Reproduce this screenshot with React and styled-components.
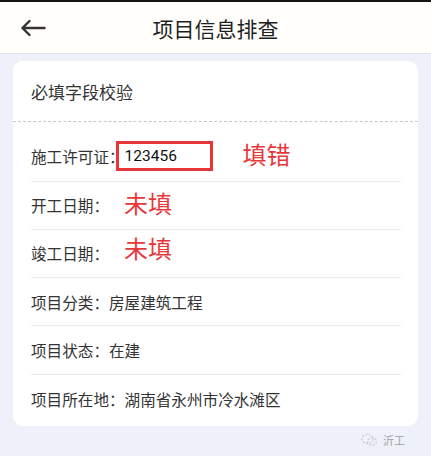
import React from "react";
import styled, { createGlobalStyle } from "styled-components";

const Global = createGlobalStyle`
  html, body { margin: 0; padding: 0; }
  body {
    background: #eef1f9;
    font-family: "Noto Sans CJK SC", "Noto Sans", sans-serif;
    width: 431px;
    height: 456px;
    overflow: hidden;
  }
`;

const Page = styled.div`
  display: flex;
  flex-direction: column;
  min-height: 456px;
  background: #eef1f9;
`;

const Header = styled.header`
  display: grid;
  grid-template-columns: 1fr auto 1fr;
  align-items: center;
  height: 51px;
  background: #fffefb;
  border-top: 2px solid #141414;
  border-bottom: 1px solid #e2e2e2;
`;

const Back = styled.div`
  display: flex;
  align-items: center;
  padding-left: 20px;
  color: #333;
`;

const Title = styled.h1`
  margin: 0;
  font-size: 21px;
  font-weight: 400;
  color: #1f1f1f;
`;

const Main = styled.main`
  display: flex;
  flex-direction: column;
  padding: 7px 13px 0 13px;
`;

const Card = styled.section`
  background: #ffffff;
  border-radius: 10px;
  display: flex;
  flex-direction: column;
  padding-bottom: 3px;
`;

const CardTitle = styled.div`
  height: 60px;
  display: flex;
  align-items: center;
  padding-left: 18px;
  font-size: 17px;
  color: #333;
  border-bottom: 1px dashed #c8c8c8;
`;

const List = styled.div`
  display: flex;
  flex-direction: column;
  padding: 0 17px 0 18px;
`;

const Row = styled.div`
  display: flex;
  align-items: center;
  box-sizing: border-box;
  height: ${(p) => (p.$first ? 59.5 : 48.3)}px;
  padding-top: ${(p) => (p.$first ? 10 : 0)}px;
  border-bottom: ${(p) => (p.$last ? "none" : "1px solid #ebebeb")};
  font-size: 15.6px;
  color: #333;
  white-space: nowrap;
`;

const Label = styled.span``;

const Value = styled.span``;

const InputBox = styled.div`
  box-sizing: border-box;
  width: 97px;
  height: 30px;
  margin-left: -9px;
  border: 3px solid #e8353a;
  background: #fff;
  display: flex;
  align-items: center;
  padding-left: 6px;
  font-family: Roboto, "Liberation Sans", sans-serif;
  font-size: 15.5px;
  color: #111;
`;

const Mark = styled.span`
  color: #e6373a;
  font-size: 24px;
  line-height: 1;
  margin-left: ${(p) => p.$gap}px;
  margin-top: ${(p) => p.$lift || 0}px;
`;

const Footer = styled.div`
  display: flex;
  justify-content: flex-end;
  align-items: center;
  gap: 5px;
  padding: 6px 13px 0 0;
  font-size: 11px;
  color: #a0a0a0;
`;

const ArrowIcon = () => (
  <svg width="26" height="18" viewBox="0 0 26 18" fill="none">
    <path
      d="M24.5 9H2.5M9.5 2L2.5 9l7 7"
      stroke="#333"
      strokeWidth="2.4"
      strokeLinecap="round"
      strokeLinejoin="round"
    />
  </svg>
);

const WeIcon = () => (
  <svg width="17" height="14" viewBox="0 0 17 14" fill="none">
    <ellipse cx="6.5" cy="6" rx="5.5" ry="4.6" stroke="#c9c9c9" strokeWidth="1.2" strokeDasharray="2 1.5" />
    <ellipse cx="11" cy="8.5" rx="4.4" ry="3.6" stroke="#c9c9c9" strokeWidth="1.2" strokeDasharray="2 1.5" />
  </svg>
);

const rows = [
  { label: "项目分类：", value: "房屋建筑工程" },
  { label: "项目状态：", value: "在建" },
  { label: "项目所在地：", value: "湖南省永州市冷水滩区" },
];

export default function App() {
  return (
    <Page>
      <Global />
      <Header>
        <Back>
          <ArrowIcon />
        </Back>
        <Title>项目信息排查</Title>
        <div />
      </Header>
      <Main>
        <Card>
          <CardTitle>必填字段校验</CardTitle>
          <List>
            <Row $first>
              <Label>施工许可证：</Label>
              <InputBox>123456</InputBox>
              <Mark $gap={30} $lift={-4}>填错</Mark>
            </Row>
            <Row>
              <Label>开工日期：</Label>
              <Mark $gap={15} $lift={-4}>未填</Mark>
            </Row>
            <Row>
              <Label>竣工日期：</Label>
              <Mark $gap={15} $lift={-10}>未填</Mark>
            </Row>
            {rows.map((r, i) => (
              <Row key={r.label} $last={i === rows.length - 1}>
                <Label>{r.label}</Label>
                <Value>{r.value}</Value>
              </Row>
            ))}
          </List>
        </Card>
        <Footer>
          <WeIcon />
          <span>沂工</span>
        </Footer>
      </Main>
    </Page>
  );
}
